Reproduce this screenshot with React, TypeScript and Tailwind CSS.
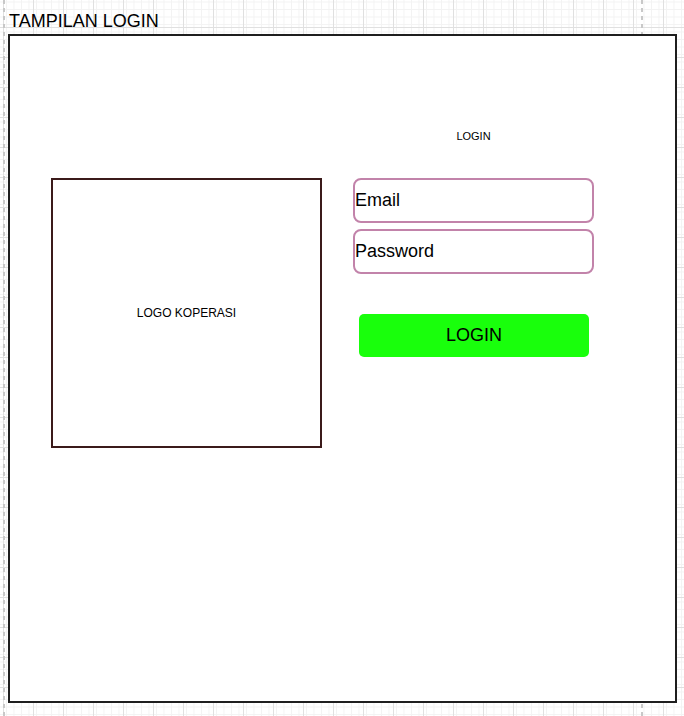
function GridBackdrop() {
  return (
    <svg className="absolute inset-0" width="684" height="716" aria-hidden>
      <defs>
        <pattern id="minor" x="3" y="27" width="7.5" height="7.5" patternUnits="userSpaceOnUse">
          <path d="M0 0.5H7.5M0.5 0V7.5" stroke="#f3f3f3" strokeWidth="1" fill="none" />
        </pattern>
        <pattern id="major" x="3" y="27" width="30" height="30" patternUnits="userSpaceOnUse">
          <rect width="30" height="30" fill="url(#minor)" />
          <path d="M0 0.5H30M0.5 0V30" stroke="#e0e0e0" strokeWidth="1" fill="none" />
        </pattern>
      </defs>
      <rect width="684" height="716" fill="url(#major)" />
      <line x1="4" y1="0" x2="4" y2="716" stroke="#c8c8c8" strokeWidth="2" strokeDasharray="4 4" />
      <line x1="642" y1="0" x2="642" y2="716" stroke="#c8c8c8" strokeWidth="2" strokeDasharray="4 4" />
    </svg>
  );
}

function Field({ label }: { label: string }) {
  return (
    <div className="h-[45px] w-full rounded-[8px] border-2 border-[#c283aa] bg-white flex items-center text-[18px] text-black">
      {label}
    </div>
  );
}

export default function App() {
  return (
    <div className="relative w-[684px] h-[716px] overflow-hidden bg-white font-['Liberation_Sans',Arial,sans-serif]">
      <GridBackdrop />
      <div className="relative">
        <div className="pt-[11px] pl-[9px] text-[18px] leading-[20px] text-black">TAMPILAN LOGIN</div>
        <div className="mt-[3px] ml-[8px] w-[669px] h-[669px] border-2 border-[#1e1e1e] bg-white pt-[94px]">
          <div className="ml-[343px] w-[241px] text-center text-[11px] leading-[12px] text-black">LOGIN</div>
          <div className="mt-[36px] pl-[41px] flex items-start">
            <div className="w-[271px] h-[270px] border-2 border-[#3b1a1a] flex items-center justify-center text-[12px] text-black">
              LOGO KOPERASI
            </div>
            <div className="ml-[31px] w-[241px] flex flex-col">
              <Field label="Email" />
              <div className="mt-[6px]">
                <Field label="Password" />
              </div>
              <div className="mt-[40px] ml-[6px] w-[230px] h-[43px] rounded-[5px] bg-[#19ff0c] flex items-center justify-center text-[18px] text-black">
                LOGIN
              </div>
            </div>
          </div>
        </div>
      </div>
    </div>
  );
}
